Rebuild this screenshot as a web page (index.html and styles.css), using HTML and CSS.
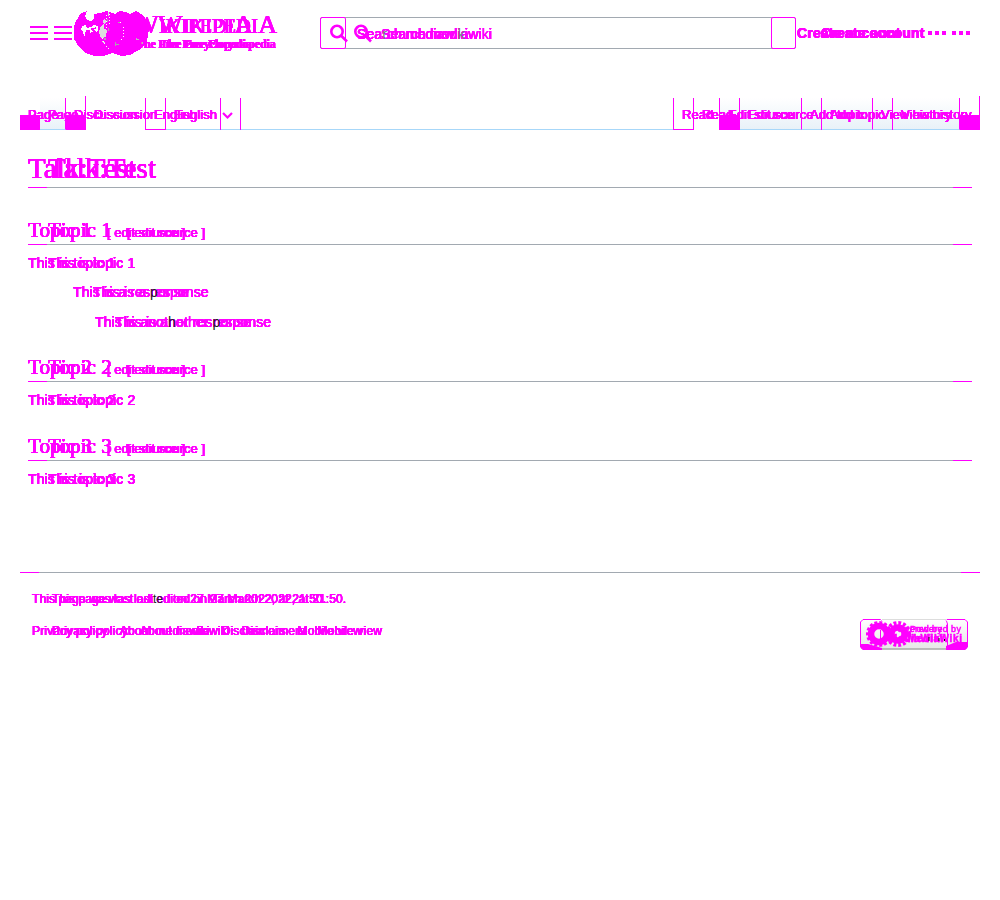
FILE: index.html
```html
<!DOCTYPE html>
<html lang="en">
<head>
<meta charset="utf-8">
<title>Talk:Test</title>
<link rel="stylesheet" href="styles.css">
</head>
<body>
<header class="header">
  <svg class="menu" width="42" height="14" fill="#f0f"><path d="M0 0h18v2H0zM0 6h18v2H0zM0 12h18v2H0zM24 0h18v2H24zM24 6h18v2H24zM24 12h18v2H24z"/></svg>
  <svg class="globe" width="76" height="48" viewBox="74 9 76 48" shape-rendering="crispEdges">
    <path fill="#f0f" d="M78 18l3-5 6-2-2 5 2 4 4 1 3-3 0-4 6-1 6-2 4 1 5 2 5-3 6 1 4 2 6-3 7 4 4 6 2 7-1 9-3 7-6 6-9 5-9 1-9-3-9 3-9 0-8-3-7-6-5-8-1-9 2-7z"/>
    <path fill="#fff" d="M82 26l4-1 1 3 4-1 2-2 5 1 0 4-2 3-5-1-1 3-6 1-1-4-2-2z"/>
    <path fill="none" stroke="#f0f" stroke-width="1.500" d="M86 31h3v4h-3v-2h3M96 28l-4 1 3 3-3 2"/>
    <path fill="#ddd" d="M100 27l4-3 0 5 3 1-1 7-5 1-2-5zM103 21l2-3 1 4-2 2zM102 41l3 1-1 2zM108 12h1v4h-1z"/>
    <path fill="#aaa" d="M107 19h1v3h-1zM108 28h1v3h-1zM115 42h1v4h-1zM116 44h3v1h-3zM118 22h2v1h-2zM104 38h2v2h-2z"/>
    <path fill="none" stroke="#fff" stroke-dasharray="1 2" d="M109 14v10M106 15v13M120 22l3 5v10l-2 4M102 38l3 6 5 6"/>
    <path fill="#bbb" d="M136 38l4 2h-4zM140 42h3v2h-3z"/>
  </svg>
  <div class="brand">
    <div class="wordmark"><span class="cap">W</span>IKIPEDI<span class="cap">A</span></div>
    <div class="tagline">The Free Encyclopedia</div>
  </div>
  <div class="search">
    <svg width="44" height="20" fill="none" stroke="#f0f"><g stroke-width="2.6"><circle cx="7" cy="7.500" r="5.7"/><path d="M11 11.500l6 6"/><circle cx="31" cy="7.500" r="5.700"/><path d="M35 11.500l6 6"/></g></svg>
    <span class="placeholder dup24">Sea<span class="gray">r</span>ch mediawi<span class="gray">k</span>i</span>
  </div>
  <div class="account dup24">Create account</div>
  <svg class="dots" width="42" height="4" fill="#f0f"><path d="M0 0h4v4H0zM7 0h4v4H7zM14 0h4v4h-4zM24 0h4v4h-4zM31 0h4v4h-4zM38 0h4v4h-4z"/></svg>
</header>

<nav class="tabs">
  <div class="tab page-tab"><span class="dup">Page</span></div>
  <div class="tab discussion"><span class="dup">Discussion</span></div>
  <div class="tab english"><span class="dup">English</span></div>
  <svg class="chevron" width="12" height="8" fill="none" stroke="#f0f" stroke-width="2.200"><path d="M1 1l4.500 4.500L10 1"/></svg>
  <div class="spacer"></div>
  <div class="tab read"><span class="dup">Read</span></div>
  <div class="tab edit"><span class="dup">Edit source</span></div>
  <div class="tab add"><span class="dup">Add topic</span></div>
  <div class="tab history"><span class="dup">View history</span></div>
</nav>

<main class="content">
  <h1 class="title dup">Talk:Test</h1>
  <section class="topic first">
    <h2 class="heading"><span class="name dup">Topic 1</span><span class="edit-link dup">[ edit source ]</span></h2>
    <p class="line dup">This is topic 1</p>
    <p class="line reply dup">This is a res<span class="dark">p</span>onse</p>
    <p class="line reply nested dup">This is anot<span class="dark">h</span>er res<span class="dark">p</span>onse</p>
  </section>
  <section class="topic second">
    <h2 class="heading"><span class="name dup">Topic 2</span><span class="edit-link dup">[ edit source ]</span></h2>
    <p class="line dup">This is topic 2</p>
  </section>
  <section class="topic third">
    <h2 class="heading"><span class="name dup">Topic 3</span><span class="edit-link dup">[ edit source ]</span></h2>
    <p class="line dup">This is topic 3</p>
  </section>
</main>

<footer class="footer">
  <p class="edited dup">This page was last edi<span class="dark">te</span>d on 27 March 2022, at 21:50.</p>
  <div class="bottom">
    <ul class="links dup"><li>Privacy policy</li><li>About mediawiki</li><li>Disclaimers</li><li>Mobile view</li></ul>
    <svg class="badge" width="108" height="31" viewBox="0 0 108 31">
      <defs><linearGradient id="badge" x2="0" y2="1"><stop stop-color="#fff"/><stop offset="1" stop-color="#e6e6e6"/></linearGradient></defs>
      <rect x=".5" y=".5" width="107" height="30" rx="2" fill="url(#badge)"/>
      <path d="M22 .5h64" stroke="#ddd"/><path d="M22 30h64" stroke="#aaa" stroke-width="1.5"/>
      <path d="M1 25l7 0 14 4v2H3l-2-2zM86 27l10-4h11v6l-2 2H86z" fill="#f0f"/>
      <path fill="none" stroke="#f0f" d="M21.500 1.500L20.500.5H3L.5 3v25L3 30.500h18M20.500 11v9M86 1.500l1-1h18l2.500 2.500v25l-2.500 2.500H86M86.500 2l1 3v22l-1 3"/>
      <g fill="none" stroke="#f0f"><g stroke-width="6.500"><circle cx="19" cy="15" r="8"/><circle cx="38" cy="15" r="6.500"/></g><g stroke-width="4" stroke-dasharray="2.800 1.910"><circle cx="19" cy="15" r="11"/><circle cx="38" cy="15" r="11"/></g></g>
      <g class="badge-text"><text x="31" y="13" textLength="51">Powered by</text><text class="badge-name" x="29" y="23" textLength="54">MediaWiki</text></g>
      <path stroke="#111" d="M69 18v4M79 19v3M84.500 20v2"/>
    </svg>
  </div>
</footer>
</body>
</html>
```
FILE: styles.css
```css
*, *::before, *::after { box-sizing: border-box; }
body { margin: 0; height: 900px; background: #fff; color: #f0f; font-family: "Liberation Sans", Arial, sans-serif; overflow: hidden; }
h1, h2, p, ul { margin: 0; padding: 0; font-weight: normal; }
svg { display: block; flex: none; }
.dup { text-shadow: 0 0 0 #f0f, 0 0 0 #f0f, 0 0 0 #f0f, 0 0 0 #f0f, 0 0 0 #f0f, 0 0 0 #f0f, 0 0 0 #f0f, 20px 0 0 #f0f, 20px 0 0 #f0f, 20px 0 0 #f0f, 20px 0 0 #f0f, 20px 0 0 #f0f, 20px 0 0 #f0f, 20px 0 0 #f0f, 20px 0 0 #f0f; }
.dup24, .brand { text-shadow: 0 0 0 #f0f, 0 0 0 #f0f, 0 0 0 #f0f, 0 0 0 #f0f, 0 0 0 #f0f, 0 0 0 #f0f, 0 0 0 #f0f, 24px 0 0 #f0f, 24px 0 0 #f0f, 24px 0 0 #f0f, 24px 0 0 #f0f, 24px 0 0 #f0f, 24px 0 0 #f0f, 24px 0 0 #f0f, 24px 0 0 #f0f; }
.dark { color: #202122; text-shadow: 20px 0 0 #f0f, 20px 0 0 #f0f, 20px 0 0 #f0f; }
.gray { color: #72777d; text-shadow: 24px 0 0 #f0f, 24px 0 0 #f0f, 24px 0 0 #f0f; }

.header { display: flex; height: 66px; padding-left: 30px; white-space: nowrap; }
.menu { margin-top: 26px; }
.globe { margin: 9px 0 0 2px; }
.brand { width: 170px; margin-left: -16px; padding-top: 14px; font-family: "Liberation Serif", serif; }
.wordmark { height: 23px; line-height: 24px; font-size: 20px; letter-spacing: .45px; }
.cap { font-size: 26px; line-height: 20px; }
.tagline { padding-left: 2px; font-size: 12px; line-height: 14px; font-weight: bold; letter-spacing: -.1px; }
.search { position: relative; display: flex; width: 476px; height: 32px; margin: 17px 0 0 16px; padding: 6px 0 0 10px; border: 1px solid #a2a9b1; border-radius: 2px; font-size: 14px; line-height: 18px; }
.search::before, .search::after { content: ""; position: absolute; top: -1px; width: 26px; height: 32px; border: 1px solid #f0f; border-radius: 2px; }
.search::before { left: -1px; }
.search::after { right: -1px; width: 25px; }
.search svg { margin-left: -1px; }
.placeholder { margin-left: -17px; padding-top: 1px; letter-spacing: .08px; }
.account { width: 131px; margin: 24px 0 0 1px; font-size: 14px; line-height: 18px; font-weight: bold; letter-spacing: .17px; }
.dots { margin-top: 31px; }

.tabs { display: flex; align-items: flex-end; height: 64px; padding: 0 20px; font-size: 13px; line-height: 16px; white-space: nowrap; background: linear-gradient(#a7d7f9, #a7d7f9) 165px 63px / 508px 1px no-repeat; }
.tab { position: relative; height: 32px; padding: 9px 0 0 8px; border-right: 1px solid #f0f; letter-spacing: .05px; }
.tab span { position: relative; z-index: 3; }
.tab::after { content: ""; position: absolute; z-index: 2; top: 0; right: -21px; width: 1px; height: 32px; background: #f0f; }
.page-tab { width: 46px; background: linear-gradient(#fff, #e8f1f8) 20px 0 / 26px 32px no-repeat; }
.page-tab::before { content: ""; position: absolute; left: 0; bottom: -1px; width: 20px; height: 15px; background: #f0f; box-shadow: 46px 0 #f0f; }
.page-tab::after { top: -2px; height: 34px; }
.page-tab, .edit, .add, .history { border-bottom: 1px solid #a7d7f9; }
.discussion { width: 80px; }
.discussion::before { content: ""; position: absolute; left: 79px; bottom: 0; width: 21px; height: 1px; background: #f0f; }
.english { width: 75px; }
.chevron { margin: 0 0 10px 1px; }
.spacer { flex: 1; }
.read { width: 47px; border-left: 1px solid #f0f; background: linear-gradient(#f0f, #f0f) 19px 0 / 1px 32px no-repeat; }
.read::before { content: ""; position: absolute; left: 0; bottom: 0; width: 20px; height: 1px; background: #f0f; }
.read::after { right: -21px; }
.edit { width: 82px; background: linear-gradient(#fff, #e8f1f8); }
.edit::before { content: ""; position: absolute; left: 0; bottom: -1px; width: 20px; height: 15px; background: #f0f; }
.add { width: 71px; background: linear-gradient(#fff, #e8f1f8); }
.history { width: 87px; margin-right: 20px; background: linear-gradient(#fff, #e8f1f8) border-box; }
.history::before { content: ""; position: absolute; left: 87px; bottom: -1px; width: 20px; height: 15px; background: #f0f; }
.history::after { top: -2px; right: -21px; height: 34px; }

.content { height: 442px; padding: 20px 28px 0; }
.title, .heading { border-bottom: 1px solid; border-image: linear-gradient(90deg, #f0f 20px, #a2a9b1 20px, #a2a9b1 calc(100% - 20px), #f0f calc(100% - 20px)) 1; font-family: "Liberation Serif", serif; }
.title { height: 38px; font-size: 28.800px; line-height: 37px; letter-spacing: .2px; }
.first { height: 142px; padding-top: 27px; }
.second { height: 79px; }
.second, .third { padding-top: 22px; }
.heading { display: flex; height: 30px; align-items: baseline; font-size: 21px; line-height: 31px; letter-spacing: .1px; }
.name { width: 79px; }
.edit-link { font-family: "Liberation Sans", Arial, sans-serif; font-size: 13px; letter-spacing: 0; }
.line { height: 27px; padding-top: 8px; font-size: 14px; line-height: 20px; letter-spacing: .12px; }
.reply { height: 30px; padding: 10px 0 0 45px; }
.nested { padding-left: 67px; }

.footer { height: 90px; margin: 0 20px; padding: 19px 12px 0; border-top: 1px solid; border-image: linear-gradient(90deg, #f0f 20px, #a2a9b1 20px, #a2a9b1 calc(100% - 20px), #f0f calc(100% - 20px)) 1; font-size: 12px; line-height: 14px; letter-spacing: .1px; }
.edited { height: 27px; }
.bottom { display: flex; justify-content: space-between; }
.links { display: flex; padding-top: 5px; list-style: none; gap: 12px; letter-spacing: .17px; white-space: nowrap; }
.badge-text { fill: #f0f; stroke: #f0f; stroke-width: .5px; font-size: 9px; letter-spacing: 0; filter: drop-shadow(19px 0 0 #f0f); }
.badge-name { font-size: 10px; font-weight: bold; }
```
